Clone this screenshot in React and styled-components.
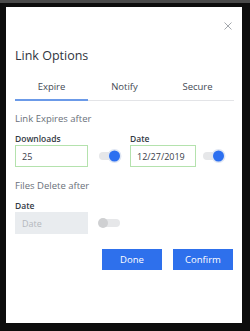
import React from "react";
import styled, { createGlobalStyle } from "styled-components";

const GlobalStyle = createGlobalStyle`
  html, body {
    margin: 0;
    padding: 0;
    background: #0d0d0d;
  }
  body {
    font-family: "Open Sans", "Liberation Sans", sans-serif;
    width: 250px;
    height: 331px;
    overflow: hidden;
    border-top: 3px solid #4a4a4a;
    box-sizing: border-box;
  }
`;

const Modal = styled.div`
  margin: 4px 0 0 6px;
  width: 236px;
  height: 316px;
  background: #fff;
  box-sizing: border-box;
  padding: 11px 8px 0 9px;
  display: flex;
  flex-direction: column;
`;

const CloseRow = styled.div`
  display: flex;
  justify-content: flex-end;
  height: 14px;
  padding-right: 2px;
`;

const Close = styled.svg`
  width: 8px;
  height: 8px;
  margin-top: 4px;
`;

const Title = styled.h2`
  margin: 16px 0 0;
  font-size: 12.5px;
  font-weight: 400;
  color: #2f3540;
  line-height: 16px;
`;

const Tabs = styled.div`
  display: grid;
  grid-template-columns: repeat(3, 1fr);
  margin-top: 16px;
  border-bottom: 1px solid #e3e4e7;
`;

const Tab = styled.div`
  text-align: center;
  font-size: 9.5px;
  color: #444a55;
  line-height: 13px;
  padding-bottom: 6px;
  margin-bottom: -1px;
  border-bottom: 2px solid ${(p) => (p.$active ? "#6b9ae8" : "transparent")};
`;

const Section = styled.div`
  margin-top: ${(p) => p.$top}px;
  font-size: 9.5px;
  color: #6a707a;
  line-height: 13px;
`;

const Row = styled.div`
  display: grid;
  grid-template-columns: 115px 1fr;
  margin-top: 8px;
`;

const Field = styled.div`
  display: flex;
  flex-direction: column;
`;

const Label = styled.div`
  font-size: 8.5px;
  font-weight: 600;
  color: #333a44;
  line-height: 12px;
`;

const Control = styled.div`
  display: flex;
  align-items: center;
  gap: ${(p) => p.$gap}px;
`;

const Input = styled.div`
  width: ${(p) => p.$w}px;
  height: 22px;
  box-sizing: border-box;
  border: 1px solid ${(p) => (p.$disabled ? "#e9ecef" : "#b4e2ad")};
  background: ${(p) => (p.$disabled ? "#e9ecef" : "#fff")};
  color: ${(p) => (p.$disabled ? "#b4b8bd" : "#3a404a")};
  font-size: 9px;
  padding-left: 6px;
  display: flex;
  align-items: center;
`;

const Toggle = styled.div`
  position: relative;
  width: 20px;
  height: 8px;
  border-radius: 4px;
  background: #e6e7e9;
`;

const Knob = styled.div`
  position: absolute;
  top: 50%;
  left: ${(p) => (p.$on ? "10px" : "-2px")};
  width: ${(p) => (p.$on ? 11 : 10)}px;
  height: ${(p) => (p.$on ? 11 : 10)}px;
  transform: translateY(-50%);
  border-radius: 50%;
  background: ${(p) => (p.$on ? "#2c6ff0" : "#cfd0d2")};
  box-shadow: ${(p) => (p.$on ? "0 0 0 1.5px #dfe6f3" : "none")};
`;

const Buttons = styled.div`
  display: flex;
  justify-content: flex-end;
  gap: 11px;
  margin-top: 15px;
  padding-right: 1px;
`;

const Button = styled.button`
  width: 60px;
  height: 21px;
  border: none;
  background: #2e70ec;
  color: #fff;
  font-family: inherit;
  font-size: 9.5px;
  padding: 0;
`;

const Switch = ({ on }) => (
  <Toggle>
    <Knob $on={on} />
  </Toggle>
);

export default function App() {
  return (
    <>
      <GlobalStyle />
      <Modal>
        <CloseRow>
          <Close viewBox="0 0 8 8">
            <path d="M0.5 0.5 L7.5 7.5 M7.5 0.5 L0.5 7.5" stroke="#9a9ea4" strokeWidth="0.9" />
          </Close>
        </CloseRow>
        <Title>Link Options</Title>
        <Tabs>
          <Tab $active>Expire</Tab>
          <Tab>Notify</Tab>
          <Tab>Secure</Tab>
        </Tabs>
        <Section $top={11}>Link Expires after</Section>
        <Row>
          <Field>
            <Label>Downloads</Label>
            <Control $gap={11}>
              <Input $w={73}>25</Input>
              <Switch on />
            </Control>
          </Field>
          <Field>
            <Label>Date</Label>
            <Control $gap={7}>
              <Input $w={66}>12/27/2019</Input>
              <Switch on />
            </Control>
          </Field>
        </Row>
        <Section $top={12}>Files Delete after</Section>
        <Row>
          <Field>
            <Label>Date</Label>
            <Control $gap={12}>
              <Input $w={73} $disabled>Date</Input>
              <Switch />
            </Control>
          </Field>
        </Row>
        <Buttons>
          <Button>Done</Button>
          <Button>Confirm</Button>
        </Buttons>
      </Modal>
    </>
  );
}
